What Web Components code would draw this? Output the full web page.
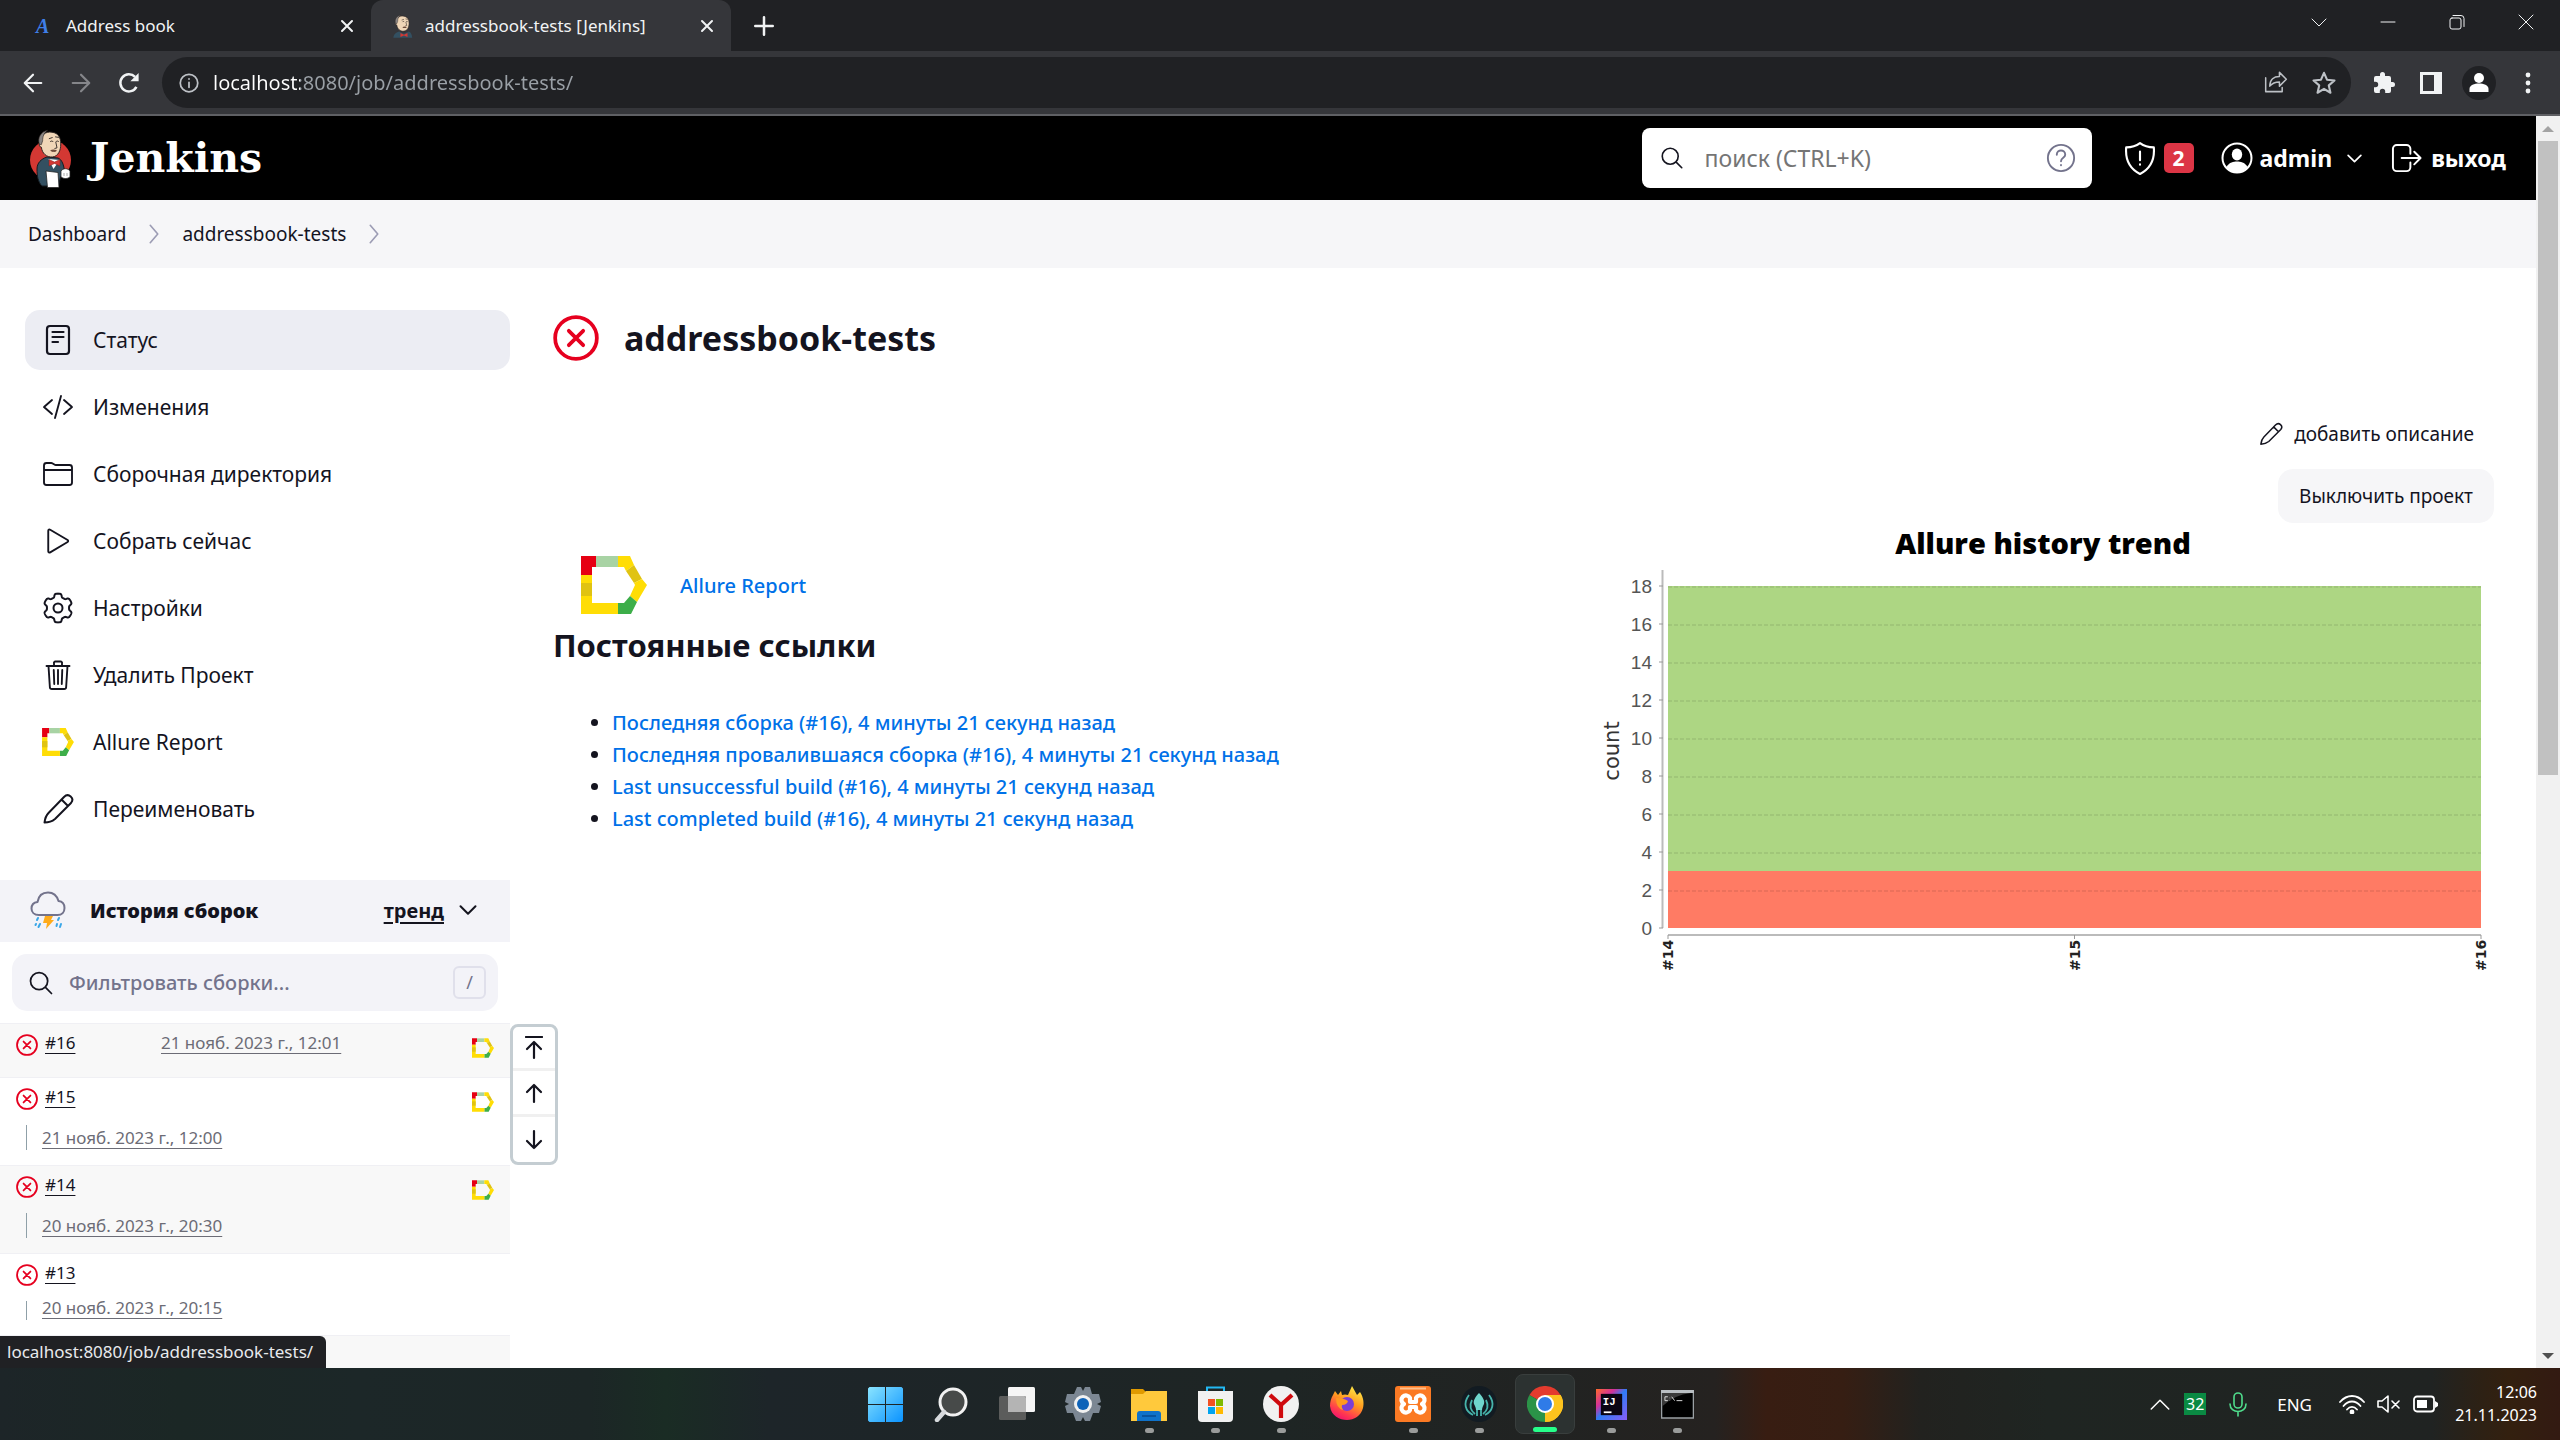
<!DOCTYPE html>
<html lang="ru">
<head>
<meta charset="utf-8">
<title>addressbook-tests [Jenkins]</title>
<style>
  :root {
    --ink: #14141f;
    --muted: #73738c;
    --link: #0071e8;
    --danger: #e6001f;
    --panel: #f3f3f8;
    --ui: "Noto Sans", "Open Sans", sans-serif;
  }
  html, body { height: 100%; }
  body { margin: 0; font-family: var(--ui); color: var(--ink); background: #fff; overflow: hidden; }
</style>
</head>
<body>
<desktop-screen>
  <browser-tabs slot="window">
    <browser-tab icon="favA" label="Address book"></browser-tab>
    <browser-tab icon="butlerHead" label="addressbook-tests [Jenkins]" active></browser-tab>
  </browser-tabs>
  <browser-toolbar slot="window"></browser-toolbar>
  <browser-viewport slot="window" status="localhost:8080/job/addressbook-tests/">
    <jenkins-header></jenkins-header>
    <jenkins-crumbs></jenkins-crumbs>
    <jenkins-page>
      <task-list slot="side">
        <task-link icon="doc" active>Статус</task-link>
        <task-link icon="code">Изменения</task-link>
        <task-link icon="folder">Сборочная директория</task-link>
        <task-link icon="play">Собрать сейчас</task-link>
        <task-link icon="gear">Настройки</task-link>
        <task-link icon="trash">Удалить Проект</task-link>
        <task-link icon="allure">Allure Report</task-link>
        <task-link icon="pencil">Переименовать</task-link>
      </task-list>
      <build-history slot="side">
        <build-row number="#16" date="21 нояб. 2023 г., 12:01" report inline shaded></build-row>
        <build-row number="#15" date="21 нояб. 2023 г., 12:00" report></build-row>
        <build-row number="#14" date="20 нояб. 2023 г., 20:30" report shaded></build-row>
        <build-row number="#13" date="20 нояб. 2023 г., 20:15" short></build-row>
        <build-row blank shaded></build-row>
      </build-history>
      <project-status>
        <trend-chart slot="chart"></trend-chart>
      </project-status>
    </jenkins-page>
  </browser-viewport>
  <task-bar slot="bar"></task-bar>
</desktop-screen>

<script>
const gearPath = (() => {
  const pts = [];
  for (let i = 0; i < 144; i++) {
    const t = i / 144 * Math.PI * 2;
    const c = Math.cos(6 * t);
    const r = 12.7 + 1.7 * Math.tanh(2.4 * c + 0.4);
    pts.push((16 + r * Math.sin(t)).toFixed(2) + ' ' + (16 - r * Math.cos(t)).toFixed(2));
  }
  return 'M' + pts.join('L') + 'Z';
})();
const line = (d, w = 32, box = '0 0 512 512') =>
  `<svg viewBox="${box}" fill="none" stroke="currentColor" stroke-width="${w}" stroke-linecap="round" stroke-linejoin="round">${d}</svg>`;
const butler = `
  <path d="M12 22C12 10 22 3 32 5c10 1 14 8 14 18 0 10-4 19-13 20-10 1-17-6-18-15-3 0-4-4-3-6z" fill="#f0d6b7" stroke="#2b2320" stroke-width="1.5"/>
  <path d="M12 24c-4-10 2-20 13-22-6 4-8 10-8 16l-2 6z" fill="#8b8684" stroke="#2b2320"/>
  <path d="M29 20c1-2 4-2 5 0M38 20c1-2 4-2 5 0M38 20l2 9-4 1M27 15l6-2M37 12l6 1" fill="none" stroke="#2b2320" stroke-width="1.4"/>
  <path d="M29 33q5-3 11 0-2 3-5 2-3 1-6-2z" fill="#6d4c3c"/>`;
const ICONS = {
  favA: `<svg viewBox="0 0 22 24" overflow="visible"><text x="4" y="19" font-family="Liberation Serif, serif" font-size="20" font-weight="700" font-style="italic" fill="#3f7fe8">A</text></svg>`,
  butlerHead: `<svg viewBox="0 0 56 60">${butler}<path d="M6 60c1-10 8-14 15-16l12 6 12-6c6 2 8 8 9 16z" fill="#335061"/><path d="M24 48l9 4 9-4v10l-9-4-9 4z" fill="#d33833"/></svg>`,
  butler: `<svg viewBox="0 0 84 118"><ellipse cx="41" cy="62" rx="41" ry="40" fill="#d33833"/><path d="M14 80c0-12 8-20 20-24l22 2c8 3 12 14 13 28l-8 10-4 18H24c-8-8-10-20-10-34z" fill="#335061" stroke="#151b20" stroke-width="2"/><path d="M37 60l10 20 12-18z" fill="#fff"/><path d="M38 61l11 5 11-5v13l-11-5-11 5z" fill="#d33833" stroke="#81201c"/><g transform="translate(4 0) scale(1.25 1.3)">${butler}</g><path d="M32 84l24 3 2 30H35z" fill="#fff" stroke="#222" stroke-width="1.5"/><path d="M62 84c4-6 14-6 18 0v12c-6 4-12 4-18 0z" fill="#fff" stroke="#222" stroke-width="1.5"/><path d="M68 88v6M74 88v6" stroke="#555"/></svg>`,
  x: line('<path d="M3 3l10 10M13 3L3 13"/>', 2, '0 0 16 16'),
  plus: line('<path d="M8 1v14M1 8h14"/>', 2, '0 0 16 16'),
  back: line('<path d="M14 8H3M8 2L2 8l6 6"/>', 1.6, '0 0 16 16'),
  fwd: line('<path d="M2 8h11M8 2l6 6-6 6"/>', 1.6, '0 0 16 16'),
  reload: `<svg viewBox="0 0 16 16"><path d="M13.4 10.8A6.2 6.2 0 1 1 12.4 3.6" fill="none" stroke="currentColor" stroke-width="1.8"/><path d="M15 .8v6H9z" fill="currentColor"/></svg>`,
  info: line('<circle cx="8" cy="8" r="7"/><path d="M8 7.4v4M8 4.6v.2"/>', 1.4, '0 0 16 16'),
  share: line('<path d="M1 5v10h12v-3M4 11c0-5 3-7 7-7V1l5 5-5 5V8c-3 0-5 .6-7 3z"/>', 1.1, '0 0 17 16'),
  star: line('<path d="M8 1.2l2 4.6 5 .5-3.8 3.3 1.1 4.9L8 11.9l-4.3 2.6 1.1-4.9L1 6.3l5-.5z"/>', 1.4, '0 0 16 16'),
  puzzle: `<svg viewBox="0 0 24 24" fill="#f1f3f4"><path d="M20.5 11H19V7a2 2 0 0 0-2-2h-4V3.5a2.5 2.5 0 0 0-5 0V5H4a2 2 0 0 0-2 2v3.800h1.500a2.700 2.700 0 0 1 0 5.400H2V20a2 2 0 0 0 2 2h3.800v-1.500a2.700 2.700 0 0 1 5.400 0V22H17a2 2 0 0 0 2-2v-4h1.500a2.500 2.500 0 0 0 0-5z"/></svg>`,
  side: `<svg viewBox="0 0 22 22"><path d="M0 0h22v22H0zM3 3v16h11V3z" fill="#f1f3f4" fill-rule="evenodd"/></svg>`,
  profile: `<svg viewBox="0 0 34 34"><circle cx="17" cy="17" r="17" fill="#202124"/><circle cx="17" cy="12" r="5" fill="#fff"/><path d="M7.500 26v-3c0-4 5-5.500 9.500-5.500s9.500 1.500 9.500 5.500v3z" fill="#fff"/></svg>`,
  dots: `<svg viewBox="0 0 24 24" fill="#f1f3f4"><circle cx="12" cy="4" r="2.400"/><circle cx="12" cy="12" r="2.400"/><circle cx="12" cy="20" r="2.400"/></svg>`,
  winDown: line('<path d="M1 5l7 7 7-7"/>', 1, '0 0 16 16'),
  winMin: line('<path d="M1 8h14"/>', 1, '0 0 16 16'),
  winMax: line('<rect x="1" y="4" width="11" height="11" rx="2"/><path d="M4 1.500h8a3 3 0 0 1 3 3v8"/>', 1, '0 0 16 16'),
  winX: line('<path d="M1 1l14 14M15 1L1 15"/>', 1, '0 0 16 16'),
  search: line('<path d="M221 64a157 157 0 10157 157A157 157 0 00221 64zM338 338l110 110"/>'),
  help: line('<circle cx="16" cy="16" r="14"/><path d="M11.500 12.500c0-6 9-6 9 0 0 3.500-4.500 3-4.500 7M16 23.500v.2"/>', 2, '0 0 32 32'),
  shield: line('<path d="M16 2c4 3 8 4 13 4 1 12-3 20-13 25C6 26 2 18 3 6c5 0 9-1 13-4zM16 10v8M16 22v.300"/>', 2, '0 0 32 32'),
  user: `<svg viewBox="0 0 32 32"><circle cx="16" cy="16" r="14.500" fill="none" stroke="currentColor" stroke-width="2"/><ellipse cx="16" cy="12.500" rx="5.200" ry="6" fill="currentColor"/><path d="M5.500 25c3-5 7-5.500 10.500-5.500s7.500.500 10.500 5.500c-3 4-7 5.500-10.500 5.500S8.500 29 5.500 25z" fill="currentColor"/></svg>`,
  down: line('<path d="M2 5l6 6 6-6"/>', 1.600, '0 0 16 16'),
  right: line('<path d="M5 1l6 7-6 7"/>', 1.300, '0 0 16 16'),
  logout: line('<path d="M20 11V6a4 4 0 0 0-4-4H6a4 4 0 0 0-4 4v19a4 4 0 0 0 4 4h10a4 4 0 0 0 4-4v-5M11 15.500h19M24 9l6.500 6.500L24 22"/>', 2, '0 0 32 32'),
  doc: line('<rect x="5" y="2" width="22" height="28" rx="3"/><path d="M10.500 8h11M10.500 13h11M10.500 18h5.500"/>', 2.200, '0 0 32 32'),
  code: line('<path d="M160 368L32 256l128-112M352 368l128-112-128-112M304 80l-96 352"/>', 30),
  folder: line('<path d="M440 432H72a40 40 0 01-40-40V120a40 40 0 0140-40h75.890a40 40 0 0122.190 6.720l27.840 18.560a40 40 0 0022.190 6.720H440a40 40 0 0140 40v240a40 40 0 01-40 40zM32 192h448"/>', 30),
  play: line('<path d="M100 91v330c0 17 17 24 31 16l279-164c12-7 12-26 0-34L131 75c-14-8-31-1-31 16z"/>', 30),
  gear: line(`<path d="${gearPath}"/><circle cx="16" cy="16" r="4.500"/>`, 2, '0 0 32 32'),
  trash: line('<path d="M104 112l22 340c1 18 14 28 32 28h196c18 0 31-10 32-28l22-340M72 112h368M192 112V72a24 24 0 0124-32h80a24 24 0 0124 32v40M256 176v224M188 176l8 224M324 176l-8 224"/>', 30),
  allure: `<svg viewBox="0 0 66 58"><path d="M0 0h15v11h-4v8H0z" fill="#e60013"/><path d="M15 0h22v11H15z" fill="#a8d3a4"/><path d="M37 0h12l4 9-8 6-2-4h-6z" fill="#ffdd05"/><path d="M53 9l8 14-8 4-8-12z" fill="#e0c312"/><path d="M61 23l5 6-10 17-7-6 5-11-1-2z" fill="#ffdd05"/><path d="M49 40l7 6-6 12H37V47h6z" fill="#3dae49"/><path d="M0 19h11v28h26v11H0z" fill="#ffdd05"/><path d="M0 27h11v13H0z" fill="#e0c312"/></svg>`,
  pencil: line('<path d="M2.500 29.500c.500-4 1.500-7 4-9.500L22 4c4.500-4.500 11 1 7 6L13 26c-3 2.500-6.500 3.500-10.500 3.500zM19.500 6.500l6.500 6.500"/>', 2, '0 0 32 32'),
  storm: `<svg viewBox="0 0 36 38" fill="none" stroke-linecap="round" stroke-linejoin="round"><path d="M9 24C4 24 1.500 21 1.500 17.500S4 11.500 7.500 11C8.500 5 12.500 1.500 18 1.500S27 5 28.500 10c4 .5 6 3.500 6 7 0 4-2.500 7-7 7z" stroke="#73738c" stroke-width="2"/><path d="M15 25h8l-2 4h3l-8 9 1-6h-4z" fill="#ffab1a"/><path d="M8 27l-1 2M10 33l-1.500 3M29 27l-1 2M31 33l-1 3M6 33l-.5 1M27 33l-.500 2" stroke="#3aa7e8" stroke-width="2"/></svg>`,
  failed: line('<circle cx="16" cy="16" r="14.500"/><path d="M11 11l10 10M21 11L11 21"/>', 2.600, '0 0 32 32'),
  top: line('<path d="M1 1h16"/><path d="M9 22V6M2 13l7-7 7 7"/>', 2.200, '0 0 18 24'),
  up: line('<path d="M9 20V3M2 10l7-7 7 7"/>', 2.200, '0 0 18 22'),
  dn: line('<path d="M9 2v17M2 12l7 7 7-7"/>', 2.200, '0 0 18 22'),
  win: `<svg viewBox="0 0 35 35"><defs><linearGradient id="g" x1="0" y1="0" x2="1" y2="1"><stop offset="0" stop-color="#8ae4ff"/><stop offset="1" stop-color="#0a93ff"/></linearGradient></defs><path d="M1.500 0H17v17H0V1.500zM18 0h15.500L35 1.500V17H18zM0 18h17v17H1.500L0 33.500zM18 18h17v15.500L33.500 35H18z" fill="url(#g)"/></svg>`,
  find: `<svg viewBox="0 0 35 35"><circle cx="19" cy="15" r="13" fill="#474a49" stroke="#f2f2f2" stroke-width="3"/><path d="M10 25l-7 8" stroke="#d7dadd" stroke-width="4.500" stroke-linecap="round"/></svg>`,
  views: `<svg viewBox="0 0 36 36"><rect x="9" y="1" width="27" height="25" rx="1.500" fill="#f5f5f5"/><rect x="0" y="10" width="27" height="24" rx="1.500" fill="#5b5c5b"/><path d="M9 10h16.500l1.500 1.500V26H9z" fill="#b4b4b4"/></svg>`,
  cog: `<svg viewBox="0 0 36 36"><path d="M12 1h4l2 4 2-4h5l2 7 7 0 2 8-4 2 4 2-2 7-6 0-3 8h-5l-2-4-2 4h-5l-3-8-6 0-2-7 4-2-4-2 2-8h7z" fill="#7c8793"/><circle cx="18" cy="18" r="9" fill="#f1f1f1"/><circle cx="18" cy="18" r="6" fill="#0f63b8"/></svg>`,
  files: `<svg viewBox="0 0 36 34"><path d="M0 2h12l3 3-2 5H0z" fill="#e09a00"/><path d="M0 7h12l3-3h21v30H0z" fill="#ffc93c"/><path d="M6 34v-7q0-3 3-3h18q3 0 3 3v7z" fill="#0f72c9"/><path d="M11 29h14" stroke="#074b8f" stroke-width="1.500"/></svg>`,
  store: `<svg viewBox="0 0 35 36"><path d="M9 7V1.500h17V7" fill="none" stroke="#22b8f2" stroke-width="2"/><path d="M0 5h35v27q0 4-4 4H4q-4 0-4-4z" fill="#f1f1f1"/><path d="M10 13h7v7h-7z" fill="#f25022"/><path d="M18 13h7v7h-7z" fill="#7fba00"/><path d="M10 21h7v7h-7z" fill="#00a4ef"/><path d="M18 21h7v7h-7z" fill="#ffb900"/></svg>`,
  yandex: `<svg viewBox="0 0 36 36"><circle cx="18" cy="18" r="18" fill="#f1f1f1"/><path d="M7 9l11 10L29 9M18 19v13" fill="none" stroke="#cf0a0e" stroke-width="4.200"/></svg>`,
  firefox: `<svg viewBox="0 0 36 36"><defs><linearGradient id="f" x1="0.800" y1="0" x2="0.300" y2="1"><stop offset="0" stop-color="#fff04a"/><stop offset=".45" stop-color="#ff9a1f"/><stop offset=".8" stop-color="#ff3850"/><stop offset="1" stop-color="#f0136e"/></linearGradient></defs><path d="M4 9l2-4 3 4 3-4 1 4q3-1 6 0l4-9 5 9 3-3c4 6 4 12 3 16-2 8-9 12-16 12S2 30 1 20c0-4 1-8 3-11z" fill="url(#f)"/><circle cx="18" cy="18" r="7" fill="#7a3fd6"/><path d="M7 12q8 0 12 3-1 4-6 4-1 2 1 5-7-2-7-12z" fill="#ff9a1f"/></svg>`,
  xampp: `<svg viewBox="0 0 36 36"><rect width="36" height="36" rx="3" fill="#fb7a24"/><path d="M5 2.500h26" stroke="#ffc08c" stroke-width="2"/><path d="M15 16v-4a4.500 4.500 0 1 0-6 6 4.500 4.500 0 1 0 6 6v-3h6v3a4.500 4.500 0 1 0 6-6 4.500 4.500 0 1 0-6-6v4z" fill="none" stroke="#fff" stroke-width="4.200" stroke-linejoin="round"/></svg>`,
  kraken: `<svg viewBox="0 0 36 36"><circle cx="18" cy="18" r="18" fill="#121b22"/><g fill="none" stroke="#46b3ab" stroke-width="1.800"><path d="M8 9c-6 8-4 16 4 20M11 14c-3 6-2 10 3 14M28 9c6 8 4 16-4 20M25 14c3 6 2 10-3 14M16 22v8M20 22v8"/></g><path d="M18 7c4 4 6 8 5 11-1 2-2 4-2 6h-6c0-2-1-4-2-6-1-3 1-7 5-11z" fill="#6fd6cd"/></svg>`,
  chrome: `<svg viewBox="0 0 36 36"><path d="M18 18L2.400 9A18 18 0 0 1 33.600 9z" fill="#e33b2e"/><path d="M18 18l15.600-9A18 18 0 0 1 18 36z" fill="#fcc31e"/><path d="M18 18l0 18A18 18 0 0 1 2.400 9z" fill="#2b9348"/><path d="M18 9h15.600A18 18 0 0 1 18 36l8-13z" fill="#fcc31e"/><circle cx="18" cy="18" r="9" fill="#fff"/><circle cx="18" cy="18" r="7" fill="#2f7be8"/></svg>`,
  idea: `<svg viewBox="0 0 32 32"><defs><linearGradient id="i" x1="0" y1="0" x2="1" y2="1"><stop offset="0" stop-color="#ff6a2b"/><stop offset=".3" stop-color="#d3319a"/><stop offset=".5" stop-color="#2f7cf6"/><stop offset="1" stop-color="#8a5cf6"/></linearGradient></defs><path d="M0 0h32v32H0z" fill="url(#i)"/><path d="M5 5h22v22H5z" fill="#0b0414"/><text x="7" y="17" font-family="Liberation Mono, monospace" font-size="11" font-weight="700" fill="#fff">IJ</text><path d="M8 24h8" stroke="#fff" stroke-width="1.800"/></svg>`,
  cmd: `<svg viewBox="0 0 34 30"><path d="M.5 1h33v28H.5z" fill="#000" stroke="#9aa0a4" stroke-width="1.500"/><path d="M0 0h34v3H0z" fill="#b9bec2"/><path d="M1 3h30q-18 2-30 14z" fill="#3a3a3a"/><path d="M7 7H4v4h3M9 8v.5M9 11v.3M11 7l3 4M16 11h6" stroke="#ddd" fill="none"/></svg>`,
  trayUp: line('<path d="M1 12l7-7 7 7"/>', 1.200, '0 0 16 16'),
  mic: line('<rect x="6" y="1" width="8" height="15" rx="4"/><path d="M2 12c0 10 16 10 16 0M10 20v4"/>', 1.600, '0 0 20 25'),
  wifi: line('<path d="M1 8c7-8 17-8 24 0M4.500 12c5-6 12-6 17 0M8 15.500c3-3.500 7-3.500 10 0"/><circle cx="13" cy="18" r="1.500" fill="currentColor"/>', 1.800, '0 0 26 20'),
  mute: line('<path d="M1 8v6h4l6 5V3L5 8zM15 8l7 7M22 8l-7 7"/>', 1.600, '0 0 24 22'),
  battery: `<svg viewBox="0 0 25 18"><rect x="1" y="1.500" width="20" height="15" rx="3" fill="none" stroke="#fff" stroke-width="1.800"/><path d="M4 5h10v8H4zM22 6l3 2v3l-3 2z" fill="#fff"/></svg>`
};

/* Base class: clones the element's template into an open shadow root. */
class Piece extends HTMLElement {
  constructor() { super(); this.attachShadow({ mode: 'open' }); }
  attr(n) { return this.getAttribute(n) || ''; }
  connectedCallback() {
    const t = document.createElement('template');
    t.innerHTML = `<style>*{box-sizing:border-box}button{font:inherit;color:inherit;background:none;border:0;padding:0;margin:0}a{color:inherit;text-decoration:none}input{font:inherit;border:0;outline:0;background:none;padding:0;min-width:0}${this.css()}</style>${this.html()}`;
    this.shadowRoot.replaceChildren(t.content.cloneNode(true));
  }
  css() { return ''; }
  html() { return '<slot></slot>'; }
}
const define = (name, css, html) => customElements.define(name, class extends Piece {
  css() { return typeof css === 'function' ? css(this) : css; }
  html() { return html === undefined ? '<slot></slot>' : typeof html === 'function' ? html(this) : html; }
});
const icon = (name, w, h = w) => `<ui-icon name="${name}" w="${w}" h="${h}"></ui-icon>`;

define('ui-icon', e => `:host{display:block;flex:none;width:${e.attr('w')}px;height:${e.attr('h')}px}svg{display:block;width:100%;height:100%}`, e => ICONS[e.attr('name')]);

define('desktop-screen', `:host{display:flex;flex-direction:column;height:100vh}`, `<slot name="window"></slot><slot name="bar"></slot>`);

define('browser-tabs', `
  :host{display:flex;height:51px;background:#202124;color:#f1f3f4;flex:none}
  .new{width:66px;display:grid;place-items:center}
  .space{flex:1}
  .ctl{display:flex;padding-top:9px}
  .ctl button{width:69px;height:26px;display:grid;place-items:center}`,
  `<slot></slot><button class="new" aria-label="Новая вкладка">${icon('plus', 20)}</button><div class="space"></div>
   <div class="ctl"><button aria-label="Поиск вкладок">${icon('winDown', 16)}</button><button aria-label="Свернуть">${icon('winMin', 16)}</button><button aria-label="Окно">${icon('winMax', 16)}</button><button aria-label="Закрыть">${icon('winX', 16)}</button></div>`);

define('browser-tab', `
  :host{display:flex;align-items:center;width:371px;padding:0 16px 0 32px;box-sizing:border-box;font-size:17px}
  :host([active]){width:360px;padding:0 16px 0 20px;background:#35363a;border-radius:12px 12px 0 0}
  .name{flex:1;display:flex;align-items:center;gap:12px;text-align:left}
  .shut{width:16px;height:16px}`,
  e => `<button class="name">${icon(e.attr('icon'), 22, 24)}${e.attr('label')}</button><button class="shut" aria-label="Закрыть вкладку">${icon('x', 16)}</button>`);

define('browser-toolbar', `
  :host{display:flex;align-items:center;height:65px;flex:none;box-sizing:border-box;background:#35363a;border-bottom:2px solid #5f6064;color:#f1f3f4;padding:0 20px 0 22px}
  .go{display:flex;gap:26px}
  .off{color:#85868a}
  .box{flex:1;height:51px;border-radius:26px;background:#202124;margin-left:22px;padding:0 15px 0 17px;display:flex;align-items:center;gap:14px;color:#bdc1c6}
  .box input{flex:1;font-size:20px;color:#9aa0a6;-webkit-text-fill-color:transparent;background:linear-gradient(90deg,#fff 87px,#9aa0a6 87px);-webkit-background-clip:text;background-clip:text}
  .in{display:flex;gap:24px}
  .out{display:flex;align-items:center;gap:20px;margin-left:21px}
  .out button:nth-child(2){margin-left:4px}`,
  `<div class="go"><button aria-label="Назад">${icon('back', 22)}</button><button class="off" aria-label="Вперёд">${icon('fwd', 22)}</button><button aria-label="Обновить">${icon('reload', 22)}</button></div>
   <label class="box">${icon('info', 20)}<input type="text" aria-label="Адрес" value="localhost:8080/job/addressbook-tests/"><span class="in">${icon('share', 24, 22)}${icon('star', 24)}</span></label>
   <div class="out"><button aria-label="Расширения">${icon('puzzle', 24)}</button><button aria-label="Панель">${icon('side', 22)}</button><button aria-label="Профиль">${icon('profile', 34)}</button><button aria-label="Меню">${icon('dots', 24)}</button></div>`);

define('browser-viewport', `
  :host{flex:1;min-height:0;display:flex;position:relative;background:#fff}
  .page{flex:1;min-width:0;overflow:hidden;display:flex;flex-direction:column}
  .bar{width:24px;background:#f1f1f1;display:flex;flex-direction:column;align-items:center;flex:none}
  .btn{height:25px;width:24px;display:grid;place-items:center}
  .btn i{border:6px solid transparent;border-top:0;border-bottom-color:#a3a3a3}
  .btn.d i{border:6px solid transparent;border-bottom:0;border-top-color:#505050}
  .thumb{flex:635;width:20px;background:#c1c1c1}
  .rest{flex:568}
  .status{position:absolute;left:0;bottom:0;height:32px;width:326px;background:#202124;color:#e8eaed;border-radius:0 6px 0 0;padding-left:7px;font-size:17px;line-height:32px;white-space:nowrap}`,
  e => `<div class="page"><slot></slot></div><div class="bar"><div class="btn"><i></i></div><div class="thumb"></div><div class="rest"></div><div class="btn d"><i></i></div></div><div class="status">${e.attr('status')}</div>`);

define('jenkins-header', `
  :host{display:flex;align-items:center;height:84px;flex:none;background:#000;color:#fff;padding:0 30px;font-size:23px;font-weight:700}
  .logo{display:flex;align-items:center;gap:18px;font:700 41px/56px "DejaVu Serif",serif;color:#fff}
  .search{margin-left:auto;width:450px;height:60px;border-radius:8px;background:#fff;display:flex;align-items:center;padding:0 16px 0 17px;gap:20px;color:var(--ink);font-weight:400}
  .search input{flex:1;font-size:23px}
  .search input::placeholder{color:#757575}
  .help{color:var(--muted)}
  .sec{display:flex;align-items:center;gap:7px;margin-left:31px}
  .badge{background:#dc3545;border-radius:5px;width:30px;height:30px;line-height:30px;text-align:center;font-size:21px}
  .usr{display:flex;align-items:center;gap:7px;margin-left:27px}
  .caret{margin-left:14px}
  .out{display:flex;align-items:center;gap:9px;margin-left:28px}`,
  `<a class="logo" href="#">${icon('butler', 42, 59)}Jenkins</a>
   <label class="search">${icon('search', 26)}<input type="text" placeholder="поиск (CTRL+K)" aria-label="поиск"><button class="help" aria-label="Справка">${icon('help', 30)}</button></label>
   <button class="sec" aria-label="Предупреждения">${icon('shield', 34)}<span class="badge">2</span></button>
   <a class="usr" href="#">${icon('user', 32)}admin</a><button class="caret" aria-label="Меню">${icon('down', 17)}</button>
   <a class="out" href="#">${icon('logout', 31)}выход</a>`);

define('jenkins-crumbs', `
  :host{display:flex;align-items:center;gap:18px;height:68px;flex:none;background:#f6f6f8;padding:0 28px;font-size:19px}
  ui-icon{color:#9c9cb4}`,
  `<a href="#">Dashboard</a>${icon('right', 20)}<a href="#">addressbook-tests</a>${icon('right', 20)}`);

define('jenkins-page', `
  :host{display:flex;flex:1;align-items:flex-start}
  .side{width:510px;flex:none;padding-top:42px}
  .main{flex:1;min-width:0;padding:42px 42px 0 43px}`,
  `<div class="side"><slot name="side"></slot></div><div class="main"><slot></slot></div>`);

define('task-list', `:host{display:flex;flex-direction:column;gap:7px;padding:0 0 41px 25px}`);
define('task-link', `
  :host{display:block;font-size:21px}
  a{display:flex;align-items:center;gap:19px;height:60px;padding:0 17px;border-radius:15px}
  :host([active]) a{background:#ecedf3}`,
  e => `<a href="#">${icon(e.attr('icon'), 32, e.attr('icon') === 'allure' ? 28 : 32)}<slot></slot></a>`);

define('build-history', `
  :host{display:block;position:relative}
  .head{display:flex;align-items:center;height:62px;background:var(--panel);padding:0 32px 2px 30px;font-size:20px;font-weight:700}
  .head b{margin:0 auto 0 24px}
  .head a{text-decoration:underline;text-underline-offset:4px;text-decoration-thickness:2px;margin-right:14px}
  .filter{display:flex;align-items:center;height:57px;margin:12px 12px;border-radius:15px;background:var(--panel);padding:0 12px 0 15px;gap:14px}
  .filter input{flex:1;font-size:20px;font-weight:500}
  .filter input::placeholder{color:var(--muted)}
  kbd{width:33px;height:33px;border:2px solid #e0e0eb;border-radius:6px;font:18px/28px var(--ui);text-align:center;color:var(--muted)}
  .nav{position:absolute;left:100%;top:144px;width:48px;height:141px;border:3px solid #c4cdd2;border-radius:8px;background:#fff;display:flex;flex-direction:column}
  .nav button{flex:43;display:grid;place-items:center}
  .nav button+button{flex:45;border-top:3px solid #f0f0f0}
  .nav button:last-child{flex:47}`,
  `<div class="head">${icon('storm', 36, 38)}<b>История сборок</b><a href="#">тренд</a>${icon('down', 20)}</div>
   <label class="filter">${icon('search', 28)}<input type="text" placeholder="Фильтровать сборки..." aria-label="Фильтровать сборки"><kbd>/</kbd></label>
   <slot></slot>
   <div class="nav"><button aria-label="В начало">${icon('top', 18, 24)}</button><button aria-label="Новее">${icon('up', 18, 22)}</button><button aria-label="Старее">${icon('dn', 18, 22)}</button></div>`);

define('build-row', `
  :host{display:block;border-top:1px solid #f0f0f4;padding:10px 16px 15px;font-size:17px;line-height:22px}
  :host([shaded]){background:#f8f8f8}
  :host([inline]){padding-bottom:21px}
  :host([blank]){height:60px}
  .top{display:flex;height:22px;align-items:flex-start;line-height:18px}
  ui-icon{color:var(--danger)}
  .n{margin-left:7px;width:116px}
  a{text-decoration:underline;text-underline-offset:4px}
  .d{color:#6c6c76}
  .rep{margin:4px 0 0 auto}
  .low{border-left:1px solid #8fa0a8;margin:15px 0 0 10px;padding-left:15px;height:25px;line-height:25px}
  :host([short]) .low{height:19px;line-height:14px}`,
  e => {
    if (e.hasAttribute('blank')) return '';
    const date = `<a class="d" href="#">${e.attr('date')}</a>`;
    return `<div class="top">${icon('failed', 22)}<span class="n"><a href="#">${e.attr('number')}</a></span>${e.hasAttribute('inline') ? date : ''}${e.hasAttribute('report') ? `<a class="rep" href="#" aria-label="Allure Report">${icon('allure', 22, 20)}</a>` : ''}</div>${e.hasAttribute('inline') ? '' : `<div class="low">${date}</div>`}`;
  });

define('project-status', `
  :host{display:block}
  .title{display:flex;align-items:center;gap:25px;height:56px}
  .title ui-icon{color:var(--danger)}
  h1{margin:0;font-size:34px;line-height:56px;font-weight:700}
  .cols{display:flex;justify-content:space-between;margin-top:48px}
  .left{flex:1;padding-top:136px}
  .rep{display:inline-flex;align-items:center;height:70px;gap:33px;padding-left:28px;color:var(--link);font-size:20px;font-weight:500}
  h2{margin:3px 0 40px;font-size:31px;line-height:44px;font-weight:700}
  ul{margin:0;padding-left:59px;font-size:20px;line-height:32px}
  li a{color:var(--link);font-weight:500}
  .right{width:900px;display:flex;flex-direction:column;align-items:flex-end}
  .desc{display:flex;align-items:center;gap:11px;height:40px;margin-right:20px;font-size:19px}
  .off{height:54px;width:216px;margin-top:15px;border-radius:15px;background:#f6f6f8;font-size:19px;white-space:nowrap}`,
  `<div class="title">${icon('failed', 46)}<h1>addressbook-tests</h1></div>
   <div class="cols"><div class="left"><a class="rep" href="#">${icon('allure', 66, 58)}Allure Report</a>
   <h2>Постоянные ссылки</h2>
   <ul><li><a href="#">Последняя сборка (#16), 4 минуты 21 секунд назад</a></li><li><a href="#">Последняя провалившаяся сборка (#16), 4 минуты 21 секунд назад</a></li><li><a href="#">Last unsuccessful build (#16), 4 минуты 21 секунд назад</a></li><li><a href="#">Last completed build (#16), 4 минуты 21 секунд назад</a></li></ul></div>
   <div class="right"><a class="desc" href="#">${icon('pencil', 24)}добавить описание</a><button class="off">Выключить проект</button><slot name="chart"></slot></div></div>`);

/* Stacked area chart: 3 failed and 15 passed for each of the three builds. */
define('trend-chart', `:host{display:block;width:100%}svg{display:block;width:100%}text{font-family:"DejaVu Sans","Liberation Sans",sans-serif}`, () => {
  const y = v => 405 - v * 19, x0 = 74, x1 = 887;
  let s = `<text x="449" y="31" text-anchor="middle" font-size="29" font-weight="800" style="font-family:'Open Sans',sans-serif">Allure history trend</text>
    <rect x="${x0}" y="${y(18)}" width="${x1 - x0}" height="${15 * 19}" fill="#add683"/><rect x="${x0}" y="${y(3)}" width="${x1 - x0}" height="57" fill="#ff7b64"/>
    <path d="M68.500 47V405M${x0} 412H${x1}" stroke="#bbb" stroke-width="2" fill="none"/>`;
  for (let v = 0; v <= 18; v += 2) {
    s += `<path d="M65 ${y(v)}h4" stroke="#999"/><text x="58" y="${y(v) + 7}" text-anchor="end" font-size="19" fill="#555" style="font-family:'Liberation Sans',sans-serif">${v}</text>`;
    if (v) s += `<path d="M${x0} ${y(v) + 1}H${x1}" stroke="#000" stroke-opacity=".1" stroke-width="1.500" stroke-dasharray="4 2"/>`;
  }
  ['#14', '#15', '#16'].forEach((t, i) => {
    const x = x0 + i * (x1 - x0) / 2;
    s += `<path d="M${x} 412v4" stroke="#999"/><text transform="translate(${x + 5} 448) rotate(-90)" font-size="14" font-weight="700" fill="#222">${t}</text>`;
  });
  return `<svg viewBox="0 0 900 457" role="img" aria-label="Allure history trend">${s}<text transform="translate(25 228) rotate(-90)" text-anchor="middle" font-size="21" fill="#333">count</text></svg>`;
});

define('task-bar', `
  :host{display:grid;grid-template-columns:1fr auto 1fr;align-items:center;height:72px;flex:none;color:#fff;font-size:18px;
    background:linear-gradient(90deg,#1d2528 0,#1b2725 7%,#1c2728 14%,#1c2626 23%,#1a2c24 26%,#1d2529 30%,#1e2524 50%,#212322 60%,#252220 67%,#381d12 69%,#361e13 72%,#22221f 75%,#1f2522 80%,#202322 95%,#2e2114 97%,#33200f 98%,#331a12 100%)}
  .apps{display:flex;gap:6px;grid-column:2;padding-left:2px}
  .apps button{width:60px;height:60px;border-radius:8px;display:grid;place-items:center;position:relative}
  .apps .on{background:#2c3231;border:1px solid #393e3d}
  .run::after{content:"";position:absolute;bottom:1px;left:calc(50% - 4px);width:9px;height:5px;border-radius:3px;background:#9a9c9b}
  .on::after{left:calc(50% - 12px);width:24px;background:#26ff8a}
  .tray{display:flex;align-items:center;justify-content:flex-end;padding-right:23px}
  .num{background:#0a8a43;width:22px;height:22px;line-height:22px;text-align:center;font-size:16px;margin:0 22px 0 14px}
  .mic{color:#4fdc8c}
  .lang{margin:0 27px 0 29px;font-size:17px}
  .sys{display:flex;gap:12px;align-items:center}
  .clock{width:86px;margin-left:13px;text-align:right;line-height:23px;font-size:16px;white-space:nowrap;display:flex;flex-direction:column;align-items:flex-end}`,
  () => {
    const apps = [['win', 35, 35], ['find', 35, 35], ['views', 36, 36], ['cog', 36, 36], ['files', 36, 34, 'run'], ['store', 35, 36, 'run'], ['yandex', 36, 36, 'run'], ['firefox', 36, 36], ['xampp', 36, 36, 'run'], ['kraken', 36, 36, 'run'], ['chrome', 36, 36, 'run on'], ['idea', 31, 31, 'run'], ['cmd', 33, 29, 'run']];
    return `<div class="apps">${apps.map(a => `<button class="${a[3] || ''}" aria-label="${a[0]}">${icon(a[0], a[1], a[2])}</button>`).join('')}</div>
      <div class="tray">${icon('trayUp', 20)}<span class="num">32</span><span class="mic">${icon('mic', 20, 25)}</span><span class="lang">ENG</span><span class="sys">${icon('wifi', 26, 20)}${icon('mute', 24, 22)}${icon('battery', 25, 18)}</span><time class="clock"><span>12:06</span><span>21.11.2023</span></time></div>`;
  });
</script>
</body>
</html>
